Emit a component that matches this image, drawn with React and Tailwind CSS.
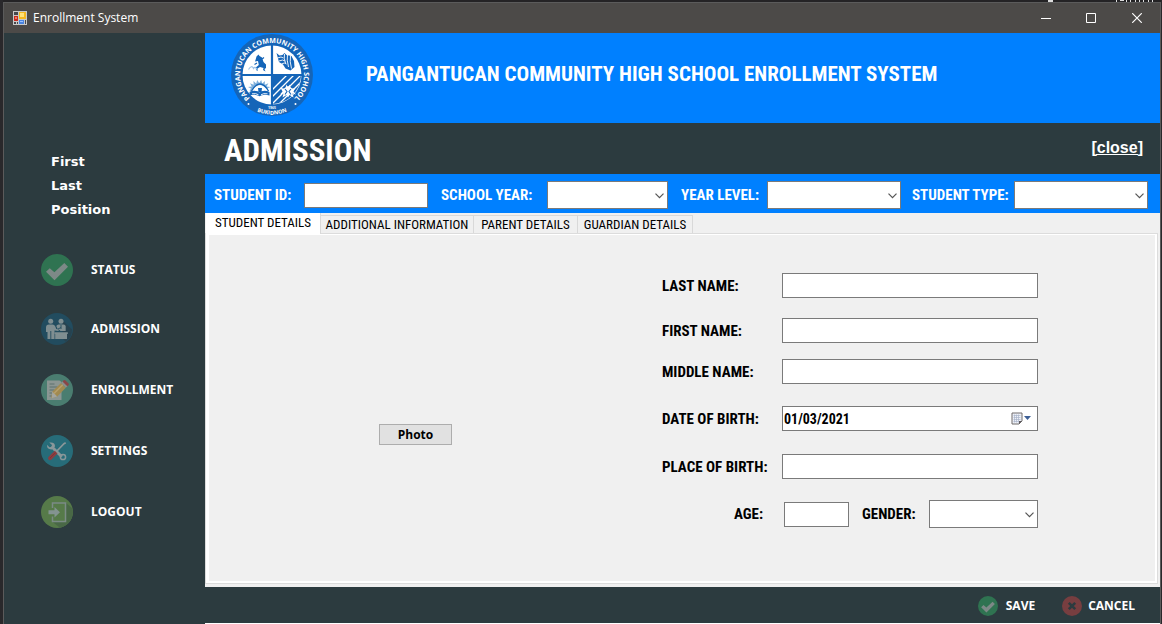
import React from "react";

const NARROW = "font-['Arial_Narrow','Roboto_Condensed','Roboto','Liberation_Sans',sans-serif]";

function CheckIcon({ className }) {
  return (
    <svg viewBox="0 0 32 32" className={className} aria-hidden="true">
      <circle cx="16" cy="16" r="16" fill="#2f7351" />
      <path d="M5 17.800l3.800-3.600 4.600 4L23.300 9l3.700 3.700L13.500 26.300z" fill="#7d8987" />
    </svg>
  );
}

function CancelIcon({ className }) {
  return (
    <svg viewBox="0 0 20 20" className={className} aria-hidden="true">
      <circle cx="10" cy="10" r="10" fill="#773e40" />
      <path d="M6.800 6.800l6.400 6.400M13.200 6.800l-6.400 6.400" stroke="#2c3b3f" strokeWidth="2.600" />
    </svg>
  );
}

function AdmissionIcon({ className }) {
  return (
    <svg viewBox="0 0 32 32" className={className} aria-hidden="true">
      <circle cx="16" cy="16" r="16" fill="#224c5f" />
      <path d="M21 7l10 9.500A16 16 0 0 1 25 29l-3-3z" fill="#27424f" />
      <g fill="#7f8e91">
        <circle cx="9.700" cy="8.200" r="2.500" />
        <circle cx="20" cy="8.200" r="2.500" />
        <path d="M5 14.500q0-3 3-3h3.500q2 0 2.800 2l1 2.500 2.700.6-.5 1.500-4-.6V26H6.500v-7H5z" />
        <path d="M15.300 13q.5-1.600 2.200-1.600h5q2 0 2.200 2V18h-5.200l-3-2.500z" />
        <path d="M13.500 19.300h13.300v1.600H26V26H14.200v-5.100h-.7z" />
      </g>
      <path d="M20 12v4M9.800 18v8M17 16l3-1.500" stroke="#224c5f" strokeWidth=".9" fill="none" />
    </svg>
  );
}

function EnrollmentIcon({ className }) {
  return (
    <svg viewBox="0 0 32 32" className={className} aria-hidden="true">
      <circle cx="16" cy="16" r="16" fill="#4a7d70" />
      <path d="M6 6.500h12.500L20.500 8v18H6z" fill="#8b9693" />
      <path d="M8.500 10h5M8.500 13h8M8.500 16h5M8.500 19h3M8.500 22h4" stroke="#5d706e" strokeWidth="1" />
      <path d="M11.200 17.800L20 9l4.800 4.800-8.800 8.900-5.800 1.500z" fill="#a18a50" />
      <path d="M11.300 17.600l4.900 5-5.500 1.700z" fill="#a4a6a0" />
      <path d="M13 19.500l9-9" stroke="#b8a06b" strokeWidth="1.500" />
      <path d="M20 9l1.800-1.800L26.600 12l-1.800 1.800z" fill="#8b8e8c" />
      <path d="M21.500 7.500l1.300-1.300q.7-.6 1.400 0l3.400 3.400q.6.7 0 1.400L26.300 12.300z" fill="#8a4547" />
    </svg>
  );
}

function SettingsIcon({ className }) {
  return (
    <svg viewBox="0 0 32 32" className={className} aria-hidden="true">
      <circle cx="16" cy="16" r="16" fill="#276c79" />
      <path d="M10.500 11.500l10.300 10.300" stroke="#89979a" strokeWidth="3" />
      <path d="M8.200 7.500l2.800 2.500-.6 2-2 .2-2.300-2.400q-.5 4.700 4.500 4.600l3.400-3q.2-4.700-5.800-3.900z" fill="#89979a" />
      <circle cx="22" cy="22" r="2.600" fill="none" stroke="#89979a" strokeWidth="1.500" />
      <path d="M14.500 17.500l8.500-8.800 1.700-1" stroke="#89979a" strokeWidth="1.700" />
      <path d="M13.800 15.700l2.700 2.700-6.300 6.400q-1.400.8-2.700-.3-1-1.300 0-2.500z" fill="#8c3d40" />
      <path d="M9 23l5.500-5.500" stroke="#733539" strokeWidth=".8" />
    </svg>
  );
}

function LogoutIcon({ className }) {
  return (
    <svg viewBox="0 0 32 32" className={className} aria-hidden="true">
      <circle cx="16" cy="16" r="16" fill="#567a49" />
      <path d="M24.500 6.500l7 6A16 16 0 0 1 19 31.700L11 25.500h13.500z" fill="#496846" />
      <path d="M11.500 12V7h13v18.500h-13v-5" fill="none" stroke="#7b8b86" strokeWidth="1.500" />
      <path d="M7.500 14.300h6v-3.200l5.500 5.100-5.500 5.200v-3.200h-6z" fill="#839390" />
    </svg>
  );
}

function WindowIcon() {
  return (
    <svg viewBox="0 0 14 14" className="size-[14px] shrink-0" aria-hidden="true">
      <path d="M0 0h14v14H0z" fill="#c9c9c9" />
      <path d="M1 1h4v3H1zM1 11h2v2H1zM4 11h1v2H4zM12 9h1v4h-1z" fill="#45474c" />
      <path d="M1 5h4v5H1z" fill="#c92b1e" />
      <path d="M2 6h2v2H2z" fill="#ef7a64" />
      <path d="M6 1h7v7H6z" fill="#f5b81f" />
      <path d="M7 2h4v4H7z" fill="#ffe27a" />
      <path d="M6 9h5v4H6z" fill="#4a84e0" />
      <path d="M7 10h3v1H7z" fill="#9cc3ff" />
    </svg>
  );
}

function Seal() {
  return (
    <svg viewBox="0 0 82 82" className="size-[82px] shrink-0" role="img" aria-label="School seal">
      <defs>
        <path id="seal-top" d="M24 68.100A32 32 0 1 1 58 68.100" />
        <path id="seal-bottom" d="M21 75.100A39.500 39.500 0 0 0 61 75.100" />
        <clipPath id="seal-quarter"><path d="M42 42H70A29.500 29.500 0 0 1 42 70z" /></clipPath>
      </defs>
      <circle cx="41" cy="41" r="41" fill="#1565b8" />
      <circle cx="41" cy="41" r="29.500" fill="#fff" />
      <path d="M41 11v60M11 41h60" stroke="#1565b8" strokeWidth="2.200" />
      <g clipPath="url(#seal-quarter)">
        <path d="M42 42h29v29H42z" fill="#1565b8" />
        <path d="M38 59l22-22M38 66l29-29M40 71l33-33M45 73l33-33M52 73l26-26M59 73l19-19" stroke="#fff" strokeWidth="1.300" />
      </g>
      <g fill="#1565b8">
        <path d="M25.500 22.500l2-2 1 1.500 2.500 1.500 1.500 4.500 2.500 2.500v3.500l-1.500 1 1 2.500-2.500-1.500.5-2-3.500-1-2.500 1.500.5 2.500-2-1-.2-2.500 3-2.500-.8-4-3 .5.500-1.500z" />
        <path d="M23.500 30.500l2.500-1.500M31 25l2-1.500" stroke="#1565b8" strokeWidth="1.200" />
      </g>
      <path d="M17.500 35.500q3-5 5-1 2-3 4 2" fill="none" stroke="#9fc3e7" strokeWidth="1.200" />
      <path d="M45.500 19l3 2.500 3-.5 2-2 2 2 5 1 2.500 5 .5 6-4 3.500-5-2-2.500-4-4-2.500z" fill="#1565b8" />
      <path d="M46.500 24q4-2 6 0M48 27q4-2 6 0M50.500 30q3-2 5 0M56.500 20q-1 6 1 13M59.500 21.500q-1 6 1 13M53.500 20q-1 4 1 9" stroke="#fff" strokeWidth=".9" fill="none" />
      <path d="M18.500 57l1.500-2.500-3-1.500 3.800-.5-1.800-3.200 3.700 1.500-.3-3.800 2.800 2.500 1-3.500 2 3 2-3 1 3.500 2.800-2.500-.3 3.800 3.700-1.500-1.800 3.200 3.800.5-3 1.500 1.500 2.500-4 2.500H22.500z" fill="#7fb0dc" />
      <path d="M21 57q3-6 8-6t8 6z" fill="#fff" />
      <path d="M20.500 57q4-7 8.500-7t8.500 7" fill="none" stroke="#1565b8" strokeWidth="1.300" />
      <path d="M27 54h4l-.5 4h-3z" fill="#1565b8" />
      <path d="M18.500 58q6-3 10 .8 4-3.800 10-.8v3.500q-6-2-10 .7-4-2.700-10-.7z" fill="#1565b8" />
      <path d="M21 59.800q4-.8 6.500 1M30 60.800q2.500-1.800 6.500-1" stroke="#fff" strokeWidth=".9" fill="none" />
      <path d="M49.500 53.500q5 3 6-3 1.500 4 3 0 1.500 6 6 3l-2 4 2.500 3-3.500-1 1 4-4-2.500-1.500 2.500-1.500-2.500-4 2.500 1-4-3.500 1 2.500-3z" fill="#fff" />
      <path d="M54 55l2 2.500-2 3M60 55l-2 2.500 2 3" stroke="#1565b8" strokeWidth="1.100" fill="none" />
      <circle cx="17.500" cy="70" r="1" fill="#fff" />
      <circle cx="64.500" cy="70" r="1" fill="#fff" />
      <g fill="#fff" className="font-['Open_Sans',sans-serif] font-bold">
        <text fontSize="7"><textPath href="#seal-top" startOffset="50%" textAnchor="middle">PANGANTUCAN COMMUNITY HIGH SCHOOL</textPath></text>
        <text fontSize="5.500"><textPath href="#seal-bottom" startOffset="50%" textAnchor="middle">BUKIDNON</textPath></text>
        <text x="41" y="74.500" fontSize="3.500" textAnchor="middle">1965</text>
      </g>
    </svg>
  );
}

function Combo({ id, className }) {
  return (
    <div className={`relative h-7 ${className}`}>
      <select id={id} className="block h-full w-full appearance-none border border-[#7a7a7a] bg-white px-1 outline-none" defaultValue="">
        <option value=""></option>
      </select>
      <svg viewBox="0 0 9 6" className="pointer-events-none absolute top-3 right-1 h-[6px] w-[9px]" aria-hidden="true">
        <path d="M.5.700l4 4 4-4" fill="none" stroke="#555" strokeWidth="1.200" />
      </svg>
    </div>
  );
}

const field = "h-[25px] min-w-0 border border-[#7a7a7a] bg-white px-1 outline-none";

const navItems = [
  { label: "STATUS", Icon: CheckIcon, space: "" },
  { label: "ADMISSION", Icon: AdmissionIcon, space: "mt-[27px]" },
  { label: "ENROLLMENT", Icon: EnrollmentIcon, space: "mt-[29px]" },
  { label: "SETTINGS", Icon: SettingsIcon, space: "mt-[29px]" },
  { label: "LOGOUT", Icon: LogoutIcon, space: "mt-[29px]" },
];

function Sidebar() {
  return (
    <aside className="w-[201px] shrink-0 pt-[117px]">
      <div className="pl-[47px] font-['DejaVu_Sans',sans-serif] text-[13px] leading-6 font-bold">
        <p>First</p>
        <p>Last</p>
        <p>Position</p>
      </div>
      <nav className="pt-8 pl-[37px]">
        <ul>
          {navItems.map(({ label, Icon, space }) => (
            <li key={label} className={space}>
              <button type="button" className="flex items-center gap-[18px] text-xs leading-4 font-bold">
                <Icon className="size-8" />
                {label}
              </button>
            </li>
          ))}
        </ul>
      </nav>
    </aside>
  );
}

function FilterBar() {
  return (
    <div className={`flex h-[39px] items-center bg-[#0080ff] pt-[3px] pr-3 pl-[9px] text-[15px] font-bold whitespace-nowrap ${NARROW}`}>
      <label htmlFor="student-id" className="w-[90px] shrink-0">STUDENT ID:</label>
      <input id="student-id" type="text" className={`${field} grow basis-[124px] text-black`} />
      <label htmlFor="school-year" className="ml-[13px] w-[106px] shrink-0">SCHOOL YEAR:</label>
      <Combo id="school-year" className="grow basis-[121px]" />
      <label htmlFor="year-level" className="ml-[13px] w-[86px] shrink-0">YEAR LEVEL:</label>
      <Combo id="year-level" className="grow basis-[134px]" />
      <label htmlFor="student-type" className="ml-[11px] w-[102px] shrink-0">STUDENT TYPE:</label>
      <Combo id="student-type" className="grow basis-[134px]" />
    </div>
  );
}

function Tabs() {
  const other = "-mb-px h-[19px] border border-l-0 border-[#d9d9d9] bg-[#f0f0f0]";
  return (
    <div role="tablist" className={`flex h-5 items-end pl-px text-[13px] leading-[18px] whitespace-nowrap ${NARROW}`}>
      <button type="button" role="tab" aria-selected="true" className="relative -mb-px h-[21px] w-[115px] border-r border-[#d9d9d9] bg-white pb-px text-center">STUDENT DETAILS</button>
      <button type="button" role="tab" aria-selected="false" className={`${other} w-[153px]`}>ADDITIONAL INFORMATION</button>
      <button type="button" role="tab" aria-selected="false" className={`${other} w-[104px]`}>PARENT DETAILS</button>
      <button type="button" role="tab" aria-selected="false" className={`${other} w-[115px]`}>GUARDIAN DETAILS</button>
    </div>
  );
}

function TextRow({ id, label, space }) {
  return (
    <div className={`flex items-center ${space}`}>
      <label htmlFor={id} className="w-[120px] shrink-0">{label}</label>
      <input id={id} type="text" className={`${field} flex-1`} />
    </div>
  );
}

function StudentForm() {
  return (
    <form className={`mr-[117px] ml-[40px] w-[376px] pt-[38px] text-[15px] leading-5 font-bold whitespace-nowrap ${NARROW}`}>
      <TextRow id="last-name" label="LAST NAME:" space="" />
      <TextRow id="first-name" label="FIRST NAME:" space="mt-5" />
      <TextRow id="middle-name" label="MIDDLE NAME:" space="mt-4" />
      <div className="mt-[22px] flex items-center">
        <label htmlFor="birth-date" className="w-[120px] shrink-0">DATE OF BIRTH:</label>
        <div className="flex h-[25px] min-w-0 flex-1 items-center border border-[#7a7a7a] bg-white pr-[5px] pl-px">
          <input id="birth-date" type="text" defaultValue="01/03/2021" className="min-w-0 flex-1 text-[14px] outline-none" />
          <button type="button" aria-label="Open calendar" className="shrink-0">
            <svg viewBox="0 0 21 13" className="h-[13px] w-[21px]" aria-hidden="true">
              <path d="M1 1h10v8l-3 3H1z" fill="#eef1f8" stroke="#6f6a6a" />
              <path d="M2.500 3.500h7M2.500 5.500h7M2.500 7.500h7M2.500 9.500h5M3.500 2.500v8M5.500 2.500v8M7.500 2.500v8" stroke="#a9b3c8" strokeWidth=".7" />
              <path d="M8 12V9h3z" fill="#5e5a5e" />
              <path d="M13 4h7l-3.500 4z" fill="#3d5f95" />
            </svg>
          </button>
        </div>
      </div>
      <TextRow id="birth-place" label="PLACE OF BIRTH:" space="mt-[23px]" />
      <div className="mt-[21px] flex items-center">
        <label htmlFor="age" className="w-[122px] shrink-0 pr-[21px] text-right">AGE:</label>
        <input id="age" type="text" className={`${field} w-[65px] shrink-0`} />
        <label htmlFor="gender" className="ml-[13px] w-[67px] shrink-0">GENDER:</label>
        <Combo id="gender" className="flex-1" />
      </div>
    </form>
  );
}

export default function App() {
  return (
    <div className="flex min-h-screen flex-col bg-[#29282b] pr-px pl-[3px] font-['Open_Sans','Noto_Sans',sans-serif] text-white">
      <div className="flex h-[2px] shrink-0 justify-end overflow-hidden bg-[#242325]">
        <svg viewBox="0 0 120 2" className="h-[2px] w-[120px]" aria-hidden="true">
          <path d="M7 0h5v2H7zM75 0h1v2h-1zM79 0h4v1h-4zM85 0h1v2h-1zM89 0h1v2h-1zM94 0h1v2h-1zM98 0h1v2h-1zM102 0h1v2h-1zM107 0h1v2h-1zM111 0h1v2h-1z" fill="#ddd" />
        </svg>
      </div>
      <div className="flex grow flex-col border-x border-t border-[#5b5b5b] bg-[#2c3b3f]">
        <header className="flex h-[30px] shrink-0 items-center bg-[#4c4a48] pl-[9px]">
          <WindowIcon />
          <h1 className="ml-[6px] flex-1 text-xs">Enrollment System</h1>
          <div className="flex">
            <button type="button" aria-label="Minimize" className="grid h-[29px] w-[45px] place-items-center">
              <svg viewBox="0 0 10 10" className="size-[10px]"><path d="M0 5.500h10" stroke="#fff" /></svg>
            </button>
            <button type="button" aria-label="Maximize" className="grid h-[29px] w-[45px] place-items-center">
              <svg viewBox="0 0 10 10" className="size-[10px]"><path d="M.5.500h9v9h-9z" fill="none" stroke="#fff" /></svg>
            </button>
            <button type="button" aria-label="Close window" className="grid h-[29px] w-[47px] place-items-center">
              <svg viewBox="0 0 10 10" className="size-[10px]"><path d="M.2.200l9.600 9.600M9.800.200L.2 9.800" stroke="#fff" strokeWidth="1.200" /></svg>
            </button>
          </div>
        </header>
        <div className="flex grow">
          <Sidebar />
          <main className="flex min-w-0 flex-1 flex-col border-b border-white">
            <div className="flex h-[90px] shrink-0 items-center bg-[#0080ff] pb-[6px] pl-[26px]">
              <Seal />
              <h2 className={`ml-[53px] text-[21px] font-bold ${NARROW}`}>PANGANTUCAN COMMUNITY HIGH SCHOOL ENROLLMENT SYSTEM</h2>
            </div>
            <div className="flex h-[51px] shrink-0 items-center justify-between pt-1 pr-[17px] pl-[19px]">
              <h3 className={`text-[31px] leading-10 font-bold ${NARROW}`}>ADMISSION</h3>
              <a href="#close" className="pb-[6px] font-['Liberation_Sans',sans-serif] text-[16px] leading-5 font-bold underline">[close]</a>
            </div>
            <FilterBar />
            <div className="flex grow flex-col bg-[#f0f0f0] pr-[2px] pb-[3px] text-black">
              <Tabs />
              <div role="tabpanel" className="flex grow border border-[#dcdcdc] bg-white pt-px pr-[2px] pb-[2px] pl-[3px]">
                <div className="flex grow items-start bg-[#f0f0f0]">
                  <div className="flex flex-1 justify-center pt-[189px]">
                    <button type="button" className="h-[21px] w-[73px] border border-[#adadad] bg-[#e1e1e1] font-['Open_Sans',sans-serif] text-xs leading-4 font-bold">Photo</button>
                  </div>
                  <StudentForm />
                </div>
              </div>
            </div>
            <footer className="flex h-9 shrink-0 items-center justify-end gap-[27px] pt-[2px] pr-[25px] text-xs font-bold">
              <button type="button" className="flex items-center gap-2"><CheckIcon className="size-5" />SAVE</button>
              <button type="button" className="flex items-center gap-[6px]"><CancelIcon className="size-5" />CANCEL</button>
            </footer>
          </main>
        </div>
      </div>
    </div>
  );
}
